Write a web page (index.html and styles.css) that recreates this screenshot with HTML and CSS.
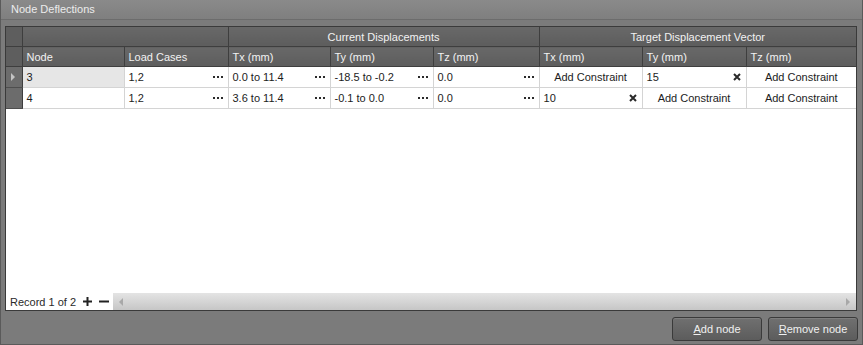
FILE: index.html
```html
<!DOCTYPE html>
<html lang="en">
<head>
    <meta charset="UTF-8">
    <title>Node Deflections</title>
    <link rel="stylesheet" href="styles.css">
</head>
<body>
    <div class="panel">
        <div class="panel-title">Node Deflections</div>
        <div class="grid">
            <table class="grid-table">
                <colgroup>
                    <col style="width:16px">
                    <col style="width:102px">
                    <col style="width:104px">
                    <col style="width:102px">
                    <col style="width:103px">
                    <col style="width:106px">
                    <col style="width:103px">
                    <col style="width:104px">
                    <col>
                </colgroup>
                <thead>
                    <tr class="band-row">
                        <th class="indicator"></th>
                        <th colspan="2"></th>
                        <th colspan="3">Current Displacements</th>
                        <th colspan="3">Target Displacement Vector</th>
                    </tr>
                    <tr class="col-row">
                        <th class="indicator"></th>
                        <th>Node</th>
                        <th>Load Cases</th>
                        <th>Tx (mm)</th>
                        <th>Ty (mm)</th>
                        <th>Tz (mm)</th>
                        <th>Tx (mm)</th>
                        <th>Ty (mm)</th>
                        <th>Tz (mm)</th>
                    </tr>
                </thead>
                <tbody>
                    <tr>
                        <td class="indicator"><span class="row-arrow"></span></td>
                        <td class="focused">3</td>
                        <td><div class="cell-edit">1,2<span class="dots"><i></i><i></i><i></i></span></div></td>
                        <td><div class="cell-edit">0.0 to 11.4<span class="dots"><i></i><i></i><i></i></span></div></td>
                        <td><div class="cell-edit">-18.5 to -0.2<span class="dots"><i></i><i></i><i></i></span></div></td>
                        <td><div class="cell-edit">0.0<span class="dots"><i></i><i></i><i></i></span></div></td>
                        <td class="constraint">Add Constraint</td>
                        <td><div class="cell-edit">15<svg class="clear" width="8" height="8" viewBox="0 0 8 8"><path d="M1 1L7 7M7 1L1 7" stroke="#2a2a2a" stroke-width="2"/></svg></div></td>
                        <td class="constraint">Add Constraint</td>
                    </tr>
                    <tr>
                        <td class="indicator"></td>
                        <td>4</td>
                        <td><div class="cell-edit">1,2<span class="dots"><i></i><i></i><i></i></span></div></td>
                        <td><div class="cell-edit">3.6 to 11.4<span class="dots"><i></i><i></i><i></i></span></div></td>
                        <td><div class="cell-edit">-0.1 to 0.0<span class="dots"><i></i><i></i><i></i></span></div></td>
                        <td><div class="cell-edit">0.0<span class="dots"><i></i><i></i><i></i></span></div></td>
                        <td><div class="cell-edit">10<svg class="clear" width="8" height="8" viewBox="0 0 8 8"><path d="M1 1L7 7M7 1L1 7" stroke="#2a2a2a" stroke-width="2"/></svg></div></td>
                        <td class="constraint">Add Constraint</td>
                        <td class="constraint">Add Constraint</td>
                    </tr>
                </tbody>
            </table>
            <div class="grid-empty"></div>
            <div class="grid-footer">
                <div class="navigator">
                    <span>Record 1 of 2</span>
                    <svg width="9" height="9" viewBox="0 0 9 9"><path d="M0 4.5H9M4.5 0V9" stroke="#222" stroke-width="2"/></svg>
                    <svg width="10" height="9" viewBox="0 0 10 9"><path d="M0 4.5H10" stroke="#222" stroke-width="2"/></svg>
                </div>
                <div class="hscroll">
                    <svg width="4" height="8" viewBox="0 0 4 8"><path d="M4 0V8L0 4Z" fill="#a8a8a8"/></svg>
                    <svg width="4" height="8" viewBox="0 0 4 8"><path d="M0 0V8L4 4Z" fill="#a8a8a8"/></svg>
                </div>
            </div>
        </div>
        <div class="actions">
            <button type="button" class="action-btn"><u>A</u>dd node</button>
            <button type="button" class="action-btn"><u>R</u>emove node</button>
        </div>
    </div>
</body>
</html>
```

FILE: styles.css
```css
body {
    margin: 0;
    font-family: "Liberation Sans", Arial, sans-serif;
    font-size: 11px;
    background: #7b7b7b;
}

.panel {
    width: 863px;
    height: 345px;
    box-sizing: border-box;
    border: 1px solid #5a5a5a;
    border-top: none;
    background: #7b7b7b;
    display: flex;
    flex-direction: column;
}

.panel-title {
    height: 19px;
    line-height: 19px;
    padding-left: 10px;
    color: #ececec;
    background: linear-gradient(#8a8a8a, #7f7f7f);
    border-bottom: 1px solid #6c6c6c;
}

.grid {
    margin: 6px 5px 0 4px;
    height: 285px;
    box-sizing: border-box;
    border: 1px solid #3a3a3a;
    background: #fff;
    display: flex;
    flex-direction: column;
}

.grid-table {
    width: 100%;
    table-layout: fixed;
    border-collapse: collapse;
}

.grid-table th {
    height: 19px;
    padding: 0 4px;
    font-weight: normal;
    color: #f2f2f2;
    background: linear-gradient(#686868, #5d5d5d);
    border-right: 1px solid #3e3e3e;
    border-bottom: 1px solid #3e3e3e;
    white-space: nowrap;
    overflow: hidden;
}

.band-row th {
    text-align: center;
}

.col-row th {
    text-align: left;
}

.grid-table th.indicator {
    background: #5e5e5e;
}

.grid-table td {
    height: 20px;
    padding: 0 4px;
    color: #1c1c1c;
    border-right: 1px solid #d4d4d4;
    border-bottom: 1px solid #d4d4d4;
    white-space: nowrap;
    overflow: hidden;
}

.grid-table td:last-child,
.grid-table th:last-child {
    border-right: none;
}

.grid-table td.indicator {
    padding: 0;
    background: #6c6c6c;
    border-right: 1px solid #3e3e3e;
    border-bottom: 1px solid #4e4e4e;
}

.row-arrow {
    display: block;
    width: 0;
    height: 0;
    margin-left: 5px;
    border-top: 4px solid transparent;
    border-bottom: 4px solid transparent;
    border-left: 4px solid #c4c4c4;
}

.grid-table td.focused {
    background: #e6e6e6;
}

.grid-table td.constraint {
    text-align: center;
}

.cell-edit {
    display: flex;
    align-items: center;
    justify-content: space-between;
    padding-right: 1px;
}

.dots {
    display: flex;
    gap: 2px;
}

.dots i {
    display: block;
    width: 2px;
    height: 2px;
    background: #2a2a2a;
}

.grid-empty {
    flex: 1;
}

.grid-footer {
    height: 17px;
    display: flex;
}

.navigator {
    width: 107px;
    display: flex;
    align-items: center;
    gap: 7px;
    padding-left: 4px;
    box-sizing: border-box;
    color: #2a2a2a;
}

.hscroll {
    flex: 1;
    display: flex;
    align-items: center;
    justify-content: space-between;
    padding: 0 6px;
    background: linear-gradient(#e4e4e4, #c6c6c6);
}

.actions {
    display: flex;
    justify-content: flex-end;
    gap: 6px;
    padding: 6px 4px 0 0;
}

.action-btn {
    width: 90px;
    height: 24px;
    font-family: "Liberation Sans", Arial, sans-serif;
    font-size: 11px;
    color: #f0f0f0;
    background: linear-gradient(#707070, #5c5c5c);
    border: 1px solid #3a3a3a;
    border-radius: 3px;
    box-shadow: inset 0 1px 0 #7e7e7e;
    cursor: pointer;
}
```
